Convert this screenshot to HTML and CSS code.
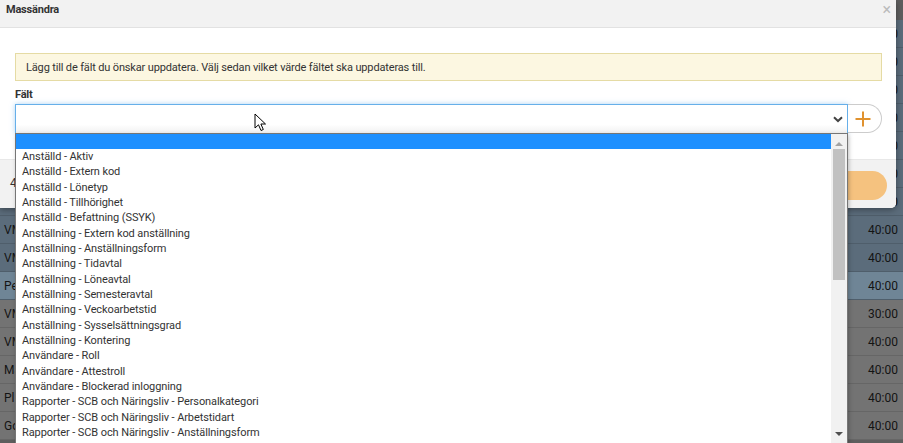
FILE: index.html
```html
<!DOCTYPE html>
<html lang="sv">
<head>
  <meta charset="UTF-8" />
  <title>Massändra</title>
  <link rel="stylesheet" href="styles.css">
</head>
<body>

  <div class="page">
    <div class="row"><span>VM</span><span>40:00</span></div>
    <div class="row"><span>VM</span><span>40:00</span></div>
    <div class="row"><span>VM</span><span>40:00</span></div>
    <div class="row"><span>VM</span><span>40:00</span></div>
    <div class="row"><span>VM</span><span>40:00</span></div>
    <div class="row"><span>VM</span><span>40:00</span></div>
    <div class="row"><span>VM</span><span>40:00</span></div>
    <div class="row"><span>VM</span><span>40:00</span></div>
    <div class="row"><span>VM</span><span>40:00</span></div>
    <div class="row selected"><span>Pe</span><span>40:00</span></div>
    <div class="row grey"><span>VM</span><span>30:00</span></div>
    <div class="row grey"><span>VM</span><span>40:00</span></div>
    <div class="row grey"><span>Ma</span><span>40:00</span></div>
    <div class="row grey"><span>Pl</span><span>40:00</span></div>
    <div class="row grey"><span>Go</span><span>40:00</span></div>
  </div>

  <div class="modal">
    <div class="modal-header">
      <span class="modal-title">Massändra</span>
      <span class="close">×</span>
    </div>
    <div class="modal-body">
      <div class="alert">Lägg till de fält du önskar uppdatera. Välj sedan vilket värde fältet ska uppdateras till.</div>
      <label class="field-label">Fält</label>
      <div class="field-row">
        <div class="select">
          <svg class="chevron" width="10" height="7" viewBox="0 0 10 7"><path d="M1 1.2 L5 5 L9 1.2" fill="none" stroke="#444" stroke-width="2"/></svg>
        </div>
        <button class="add-btn">
          <svg width="16" height="16" viewBox="0 0 16 16"><path d="M8 0.5 V15.5 M0.5 8 H15.5" stroke="#e0922f" stroke-width="2"/></svg>
        </button>
      </div>
    </div>
    <div class="modal-footer">
      <span class="count">4</span>
      <button class="save-btn"></button>
    </div>
  </div>

  <div class="dropdown">
    <ul class="options">
      <li class="highlight">&nbsp;</li>
      <li>Anställd - Aktiv</li>
      <li>Anställd - Extern kod</li>
      <li>Anställd - Lönetyp</li>
      <li>Anställd - Tillhörighet</li>
      <li>Anställd - Befattning (SSYK)</li>
      <li>Anställning - Extern kod anställning</li>
      <li>Anställning - Anställningsform</li>
      <li>Anställning - Tidavtal</li>
      <li>Anställning - Löneavtal</li>
      <li>Anställning - Semesteravtal</li>
      <li>Anställning - Veckoarbetstid</li>
      <li>Anställning - Sysselsättningsgrad</li>
      <li>Anställning - Kontering</li>
      <li>Användare - Roll</li>
      <li>Användare - Attestroll</li>
      <li>Användare - Blockerad inloggning</li>
      <li>Rapporter - SCB och Näringsliv - Personalkategori</li>
      <li>Rapporter - SCB och Näringsliv - Arbetstidart</li>
      <li>Rapporter - SCB och Näringsliv - Anställningsform</li>
    </ul>
    <div class="scrollbar">
      <span class="arrow up"></span>
      <span class="thumb"></span>
      <span class="arrow down"></span>
    </div>
  </div>

  <svg class="cursor" width="14" height="20" viewBox="0 0 14 20">
    <path d="M1 1 L1 15 L4.5 11.8 L7 17.5 L9.3 16.5 L6.9 11 L11.5 11 Z" fill="#fff" stroke="#000" stroke-width="1"/>
  </svg>

</body>
</html>
```

FILE: styles.css
```css
* {
  box-sizing: border-box;
}

body {
  margin: 0;
  font-family: Roboto, 'Liberation Sans', sans-serif;
  color: #333;
  background: #5e5e5e;
  height: 443px;
  overflow: hidden;
  position: relative;
}

/* dimmed page behind the modal */
.page {
  padding-top: 20px;
}

.row {
  display: flex;
  justify-content: space-between;
  align-items: center;
  height: 28px;
  padding: 0 5px 0 4px;
  background: #5b6c7b;
  border-bottom: 1px solid #4f5e6b;
  color: #141414;
  font-size: 12px;
}

.row.selected {
  background: #6f8596;
}

.row.grey {
  background: #737373;
  border-bottom-color: #666;
}

/* modal */
.modal {
  position: absolute;
  top: 0;
  left: 0;
  width: 896px;
  height: 208px;
  background: #fff;
  border-radius: 0 0 5px 0;
  box-shadow: 0 2px 6px rgba(0,0,0,0.35);
  display: flex;
  flex-direction: column;
  overflow: hidden;
}

.modal-header {
  height: 28px;
  background: #f2f2f2;
  border-bottom: 1px solid #e2e2e2;
  display: flex;
  justify-content: space-between;
  align-items: flex-start;
  padding: 3px 5px 0 6px;
}

.modal-title {
  font-size: 11px;
  font-weight: bold;
  color: #333;
  letter-spacing: -0.2px;
}

.close {
  font-size: 16px;
  line-height: 12px;
  color: #bbb;
  margin-top: 1px;
}

.modal-body {
  flex: 1;
  padding: 25px 14px 0 15px;
}

.alert {
  height: 28px;
  background: #fcf7e1;
  border: 1px solid #e5dba4;
  padding: 0 10px;
  display: flex;
  align-items: center;
  font-size: 11px;
  letter-spacing: -0.15px;
  color: #333;
}

.field-label {
  display: block;
  margin-top: 7px;
  height: 16px;
  font-size: 11px;
  font-weight: bold;
  letter-spacing: -0.2px;
}

.field-row {
  display: flex;
  height: 29px;
}

.select {
  flex: 1;
  border: 1px solid #66afe9;
  border-bottom: none;
  box-shadow: 0 0 5px rgba(102,175,233,0.55);
  background: linear-gradient(#fff 70%, #f1f1f1);
  display: flex;
  justify-content: flex-end;
  align-items: center;
  padding-right: 4px;
}

.add-btn {
  width: 34px;
  border: 1px solid #ccc;
  border-left: none;
  border-radius: 0 15px 15px 0;
  background: #fff;
  display: flex;
  align-items: center;
  justify-content: center;
  padding: 0 3px 0 0;
}

.modal-footer {
  height: 49px;
  background: #f2f2f2;
  border-top: 1px solid #e8e8e8;
  display: flex;
  justify-content: space-between;
  align-items: center;
  padding: 0 9px 0 10px;
}

.count {
  font-size: 12px;
  color: #333;
  margin-top: -3px;
}

.save-btn {
  width: 130px;
  height: 29px;
  border: none;
  border-radius: 15px;
  background: #f5c27f;
  margin-top: 2px;
}

/* open select list */
.dropdown {
  position: absolute;
  top: 133px;
  left: 15px;
  width: 833px;
  height: 310px;
  background: #fff;
  border: 1px solid #767676;
  border-bottom: none;
  display: flex;
  box-shadow: 1px 2px 4px rgba(0,0,0,0.25);
}

.options {
  list-style: none;
  margin: 0;
  padding: 0;
  flex: 1;
}

.options li {
  height: 15.33px;
  line-height: 15.33px;
  padding-left: 6px;
  font-size: 11px;
  letter-spacing: -0.1px;
  color: #333;
  white-space: nowrap;
}

.options li.highlight {
  background: #1e90ff;
  height: 15px;
}

.scrollbar {
  width: 16px;
  background: #f1f1f1;
  position: relative;
  display: flex;
  flex-direction: column;
  align-items: center;
}

.thumb {
  width: 12px;
  height: 131px;
  background: #c1c1c1;
  margin-top: 3px;
}

.arrow {
  width: 0;
  height: 0;
  border-left: 4px solid transparent;
  border-right: 4px solid transparent;
}

.arrow.up {
  border-bottom: 4px solid #a3a3a3;
  margin-top: 8px;
}

.arrow.down {
  border-top: 4px solid #505050;
  position: absolute;
  top: 298px;
}

.cursor {
  position: absolute;
  left: 254px;
  top: 113px;
}
```
